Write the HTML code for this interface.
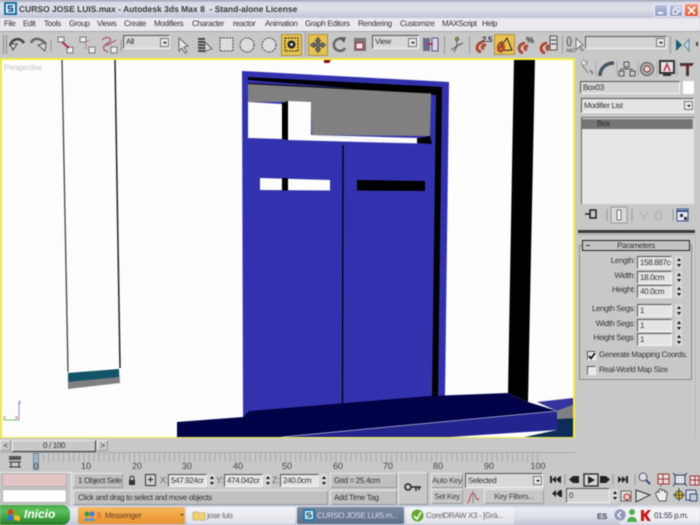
<!DOCTYPE html>
<html><head><meta charset="utf-8">
<style>
html,body{margin:0;padding:0;width:700px;height:525px;overflow:hidden;background:#c8c8c8}
body{font-family:"Liberation Sans",sans-serif;font-size:8px;letter-spacing:-.35px;color:#333;text-rendering:geometricPrecision}
#r{position:absolute;left:0;top:0;width:700px;height:525px;overflow:hidden;filter:blur(.5px)}
.a{position:absolute;white-space:nowrap}
.f{position:absolute;background:#e4e4e4;border-top:1px solid #555;border-left:1px solid #555;border-right:1px solid #f5f5f5;border-bottom:1px solid #f5f5f5;box-sizing:border-box;white-space:nowrap;overflow:hidden;line-height:12px;padding-left:2px}
.b{position:absolute;background:#c8c8c8;border-top:1px solid #e8e8e8;border-left:1px solid #e8e8e8;border-right:1px solid #999;border-bottom:1px solid #999;box-sizing:border-box;text-align:center;white-space:nowrap;overflow:hidden}
.s{position:absolute;width:7px;height:13px;background:#d8d8d8}
.s:before{content:"";position:absolute;left:1.5px;top:2px;border-left:2px solid transparent;border-right:2px solid transparent;border-bottom:3px solid #111}
.s:after{content:"";position:absolute;left:1.5px;top:8px;border-left:2px solid transparent;border-right:2px solid transparent;border-top:3px solid #111}
.l{position:absolute;text-align:right;width:60px;left:575px;white-space:nowrap}
.dd{position:absolute;width:9px;height:9px;background:#e8e8e8;border:1px solid #777;box-sizing:border-box}
.dd:after{content:"";position:absolute;left:1.5px;top:2.5px;border-left:2px solid transparent;border-right:2px solid transparent;border-top:2.5px solid #000}
.tb{position:absolute;top:507px;height:17px;box-sizing:border-box;border-radius:2px;line-height:17px;white-space:nowrap;overflow:hidden}
.n{position:absolute;top:461px;font-size:9px;letter-spacing:0;color:#444;transform:translateX(-50%)}
.m{position:absolute;top:19px;white-space:nowrap;color:#333}
svg{position:absolute;overflow:visible}
</style></head><body><div id="r">

<!-- title bar -->
<div class="a" style="left:0;top:0;width:700px;height:18px;background:linear-gradient(#8b90ac 0,#d6d8e4 12%,#dfe1ea 50%,#bfc3d6 100%)"></div>
<svg style="left:4px;top:2px" width="13" height="13"><rect width="13" height="13" fill="#1f6f9e"/><rect x="2" y="2" width="9" height="9" fill="#dff"/><path d="M9 4H4.500V6.500H8.500V9H4" fill="none" stroke="#1a4f8a" stroke-width="1.600"/></svg>
<div class="a" style="left:19px;top:3px;font-size:8.500px;font-weight:bold;color:#3a3a3a;line-height:13px;letter-spacing:0">CURSO JOSE LUIS.max  -  Autodesk 3ds Max 8  &nbsp;- Stand-alone License</div>
<div class="a" style="left:654px;top:4px;width:14px;height:13px;background:linear-gradient(#b8c0dc,#8e98c0);border:1px solid #eef;box-sizing:border-box;border-radius:2px"></div>
<div class="a" style="left:658px;top:12px;width:5px;height:2px;background:#fff"></div>
<div class="a" style="left:669px;top:4px;width:14px;height:13px;background:linear-gradient(#b8c0dc,#8e98c0);border:1px solid #eef;box-sizing:border-box;border-radius:2px"></div>
<svg style="left:672px;top:6px" width="9" height="9"><path d="M1 3.500H5.500V8H1ZM3 3V1H8V5.500H6" fill="none" stroke="#fff"/></svg>
<div class="a" style="left:684px;top:3px;width:15px;height:14px;background:linear-gradient(#ee9a80,#d85030);border:1px solid #fdd;box-sizing:border-box;border-radius:2px"></div>
<svg style="left:687px;top:6px" width="9" height="9"><path d="M1 1L8 8M8 1L1 8" stroke="#fff" stroke-width="1.600"/></svg>

<!-- menu -->
<div class="a" style="left:0;top:18px;width:700px;height:14px;background:#e9e9ee"></div>
<div class="a" style="left:0;top:31px;width:700px;height:1px;background:#aaa"></div>
<div class="m" style="left:4px">File</div>
<div class="m" style="left:23px">Edit</div>
<div class="m" style="left:44px">Tools</div>
<div class="m" style="left:69px">Group</div>
<div class="m" style="left:97px">Views</div>
<div class="m" style="left:124px">Create</div>
<div class="m" style="left:154px">Modifiers</div>
<div class="m" style="left:192px">Character</div>
<div class="m" style="left:233px">reactor</div>
<div class="m" style="left:265px">Animation</div>
<div class="m" style="left:305px">Graph Editors</div>
<div class="m" style="left:358px">Rendering</div>
<div class="m" style="left:400px">Customize</div>
<div class="m" style="left:442px">MAXScript</div>
<div class="m" style="left:482px">Help</div>

<!-- toolbar -->
<div class="a" style="left:0;top:32px;width:700px;height:26px;background:#c8c8c8"></div>
<div class="a" style="left:3px;top:35px;width:1px;height:19px;background:#888"></div>
<div class="a" style="left:6px;top:35px;width:1px;height:19px;background:#888"></div>
<svg style="left:0;top:32px" width="700" height="26" fill="none">
<path d="M10 14C12 6 20 5 24 11" stroke="#444" stroke-width="2.500"/><path d="M10 12L17 12L13 18Z" fill="#ddd" stroke="#444"/>
<path d="M45 11C39 5 33 6 31 11" stroke="#666" stroke-width="2.500"/><path d="M38 13L46 11L45 19Z" fill="#ddd" stroke="#555"/>
<line x1="51" y1="8" x2="51" y2="20" stroke="#999"/>
<rect x="58" y="5" width="6" height="5" fill="#eee" stroke="#777"/><rect x="67" y="15" width="6" height="6" fill="#eee" stroke="#777"/><path d="M62 10L69 16" stroke="#b03040" stroke-width="2"/>
<rect x="80" y="5" width="6" height="5" fill="#eee" stroke="#777"/><rect x="89" y="15" width="6" height="6" fill="#eee" stroke="#777"/><path d="M84 11L90 8M86 12L86 18" stroke="#c06070" stroke-dasharray="2 1"/>
<rect x="111" y="15" width="6" height="6" fill="#eee" stroke="#777"/><path d="M102 8C108 2 114 8 108 11C102 14 102 18 108 20M106 14L116 8" stroke="#a04050"/>
<line x1="121" y1="8" x2="121" y2="20" stroke="#999"/>
<path d="M179 6V19L182 16L185 21L187 20L184 15L188 14Z" fill="#e8e8e8" stroke="#666"/>
<path d="M198 7H205M198 10H205M198 13H205M198 16H205M198 19H205" stroke="#444" stroke-width="2"/><path d="M205 10V20L208 18L212 17Z" fill="#ddd" stroke="#666"/>
<rect x="220" y="6" width="13" height="13" fill="#ddd" stroke="#444" stroke-dasharray="2 1"/>
<circle cx="247" cy="13" r="7" fill="#ddd" stroke="#444" stroke-dasharray="2 1"/>
<circle cx="269" cy="13" r="7" fill="#ddd" stroke="#444" stroke-dasharray="2 1"/>
</svg>
<div class="f" style="left:123px;top:35px;width:47px;height:14px;background:#d8d8d8">All</div>
<div class="dd" style="left:160px;top:38px"></div>
<div class="a" style="left:281px;top:34px;width:21px;height:22px;background:#e8c250;border:1px solid #a89040;box-sizing:border-box"></div>
<svg style="left:281px;top:34px" width="21" height="22" fill="none"><rect x="4" y="4" width="13" height="13" stroke="#222" stroke-dasharray="2 1"/><circle cx="10.500" cy="10.500" r="4" fill="#222"/><circle cx="10.500" cy="10.500" r="1.500" fill="#ddd"/></svg>
<div class="a" style="left:305px;top:32px;width:1px;height:24px;background:#999"></div>
<div class="a" style="left:308px;top:34px;width:20px;height:22px;background:#e8c250;border:1px solid #a89040;box-sizing:border-box"></div>
<svg style="left:308px;top:34px" width="20" height="22"><path d="M10 3L13 7H11.500V9.500H14V8L18 11L14 14V12.500H11.500V15H13L10 19L7 15H8.500V12.500H6V14L2 11L6 8V9.500H8.500V7H7Z" fill="#666" stroke="#333" stroke-width=".5"/></svg>
<svg style="left:330px;top:35px" width="20" height="20" fill="none"><path d="M14 4C8 2 3 6 4 11C5 16 12 18 15 13" stroke="#666" stroke-width="2.500"/><path d="M10 3L16 2L14 8Z" fill="#555"/></svg>
<svg style="left:354px;top:38px" width="14" height="14"><rect width="12" height="13" fill="#777"/><rect x="2" y="5" width="7" height="6" fill="#f2e4e4" stroke="#b03040"/></svg>
<div class="f" style="left:372px;top:35px;width:47px;height:14px;background:#d8d8d8">View</div>
<div class="dd" style="left:408px;top:38px"></div>
<svg style="left:422px;top:36px" width="18" height="16"><rect x="1" y="2" width="7" height="13" fill="#6a6a8a"/><rect x="10" y="2" width="6" height="13" fill="#d8d8e8" stroke="#557"/><path d="M6 8H11" stroke="#c03040" stroke-width="2"/></svg>
<div class="a" style="left:444px;top:36px;width:1px;height:18px;background:#999"></div>
<svg style="left:449px;top:36px" width="16" height="18" fill="none" stroke="#555"><path d="M8 3V10M8 10L2 14M8 10L14 7M5 16L8 10"/><circle cx="8" cy="3" r="1.500" fill="#c8b040"/></svg>
<div class="a" style="left:469px;top:36px;width:1px;height:18px;background:#999"></div>
<svg style="left:473px;top:33px" width="22" height="22" fill="none"><path d="M10 9C3 10 2 18 8 19" stroke="#b04830" stroke-width="3"/><path d="M13 12C9 12 8 15 11 16" stroke="#b04830" stroke-width="3"/><text x="9" y="9" font-family="Liberation Sans" font-size="8" font-weight="bold" fill="#333" stroke="none">2.5</text></svg>
<div class="a" style="left:494px;top:34px;width:21px;height:21px;background:#e8c250;border:1px solid #a89040;box-sizing:border-box"></div>
<svg style="left:494px;top:34px" width="21" height="21" fill="none"><path d="M4 17L13 4L18 16Z" stroke="#222"/><path d="M9 8C3 10 3 16 8 18" stroke="#b04830" stroke-width="3"/><path d="M11 12C8 12 8 15 11 16" stroke="#b04830" stroke-width="3"/></svg>
<svg style="left:517px;top:33px" width="20" height="22" fill="none"><path d="M8 10C1 11 0 18 6 20" stroke="#b04830" stroke-width="3"/><path d="M11 13C7 13 7 16 10 17" stroke="#b04830" stroke-width="3"/><text x="9" y="10" font-family="Liberation Sans" font-size="9" font-weight="bold" fill="#333" stroke="none">%</text></svg>
<svg style="left:539px;top:33px" width="20" height="22" fill="none"><path d="M8 10C1 11 0 18 6 20" stroke="#b04830" stroke-width="3"/><path d="M11 13C7 13 7 16 10 17" stroke="#b04830" stroke-width="3"/><rect x="11" y="3" width="7" height="14" fill="#ddd" stroke="#555"/><path d="M12 7H17M12 11H17" stroke="#333"/></svg>
<div class="a" style="left:562px;top:36px;width:1px;height:18px;background:#999"></div>
<div class="a" style="left:566px;top:36px;font-size:10px;color:#444">{}</div>
<div class="a" style="left:566px;top:48px;font-size:5px;color:#444">ABC</div>
<svg style="left:574px;top:37px" width="10" height="16"><path d="M2 1V13L5 10L8 14L9 13L6 9L9 8Z" fill="#e8e8e8" stroke="#777"/></svg>
<div class="f" style="left:585px;top:36px;width:82px;height:13px;background:#d4d4d4"></div>
<div class="dd" style="left:656px;top:38px"></div>
<div class="a" style="left:670px;top:36px;width:1px;height:18px;background:#999"></div>
<svg style="left:675px;top:38px" width="16" height="14"><path d="M1 1L7 7L1 13Z" fill="#1f6070"/><path d="M14 1L9 7L14 13Z" fill="#c8d4d8" stroke="#68a"/></svg>
<div class="a" style="left:696px;top:42px;width:2px;height:4px;background:#444"></div>

<!-- viewport -->
<svg style="left:0;top:58px" width="575" height="382" viewBox="0 58 575 382">
<rect x="0" y="58" width="575" height="382" fill="#fdfdfd"/>
<path d="M62 60L68 372" stroke="#444" stroke-width="1.300"/>
<path d="M115 60L120 368" stroke="#222" stroke-width="1.500"/>
<path d="M68 373L119 369L120 383L68 389Z" fill="#808080"/>
<path d="M68 373L119 369L119 377L68 382Z" fill="#135368"/>
<path d="M514 58H535L528 402L508 393Z" fill="#000"/>
<path d="M324 60H331L329 63H324Z" fill="#8a1010"/>
<path d="M242 71L449 82L445 397L243 417Z" fill="#3232ae"/>
<path d="M248 77L442 87L438 397L432 397L436 95L248 80Z" fill="#000"/>
<path d="M248 83L432 92.500V94L248 85Z" fill="#000"/>
<path d="M248 84L431 93.500L430 136L312 135L311 102L248 102Z" fill="#808080"/>
<path d="M248 102L282 104V139L248 138Z" fill="#fdfdfd"/>
<path d="M282 103L288 101V140L282 139Z" fill="#000"/>
<path d="M288 101L311 102V135L417 143.500L288 140Z" fill="#fdfdfd"/>
<path d="M311 135L417 138V143.500Z" fill="#fdfdfd"/>
<path d="M417 138.500L430 136L432 144L417 143Z" fill="#000"/>
<path d="M343 145L342.500 403" stroke="#000" stroke-width="1.300"/>
<path d="M260 178L330 180V190.500L260 190Z" fill="#fdfdfd"/>
<path d="M282 178H288V190.500H282Z" fill="#000"/>
<path d="M357 180L425 181V191L357 190.500Z" fill="#000"/>
<path d="M177 422L243 417L249 411L430 396L508 393L528 402L557 411L280 437L177 437Z" fill="#020248"/>
<path d="M557 411L280 437H450L557 430Z" fill="#24248f"/>
<path d="M557 411L282 437" stroke="#b8b8d8" stroke-width=".8"/>
<path d="M537 402L573 398V405L557 411Z" fill="#34349c"/>
<path d="M557 411L573 405V418L557 419Z" fill="#808080"/>
<path d="M557 419L573 418V438H520L557 430Z" fill="#0d2d58"/>
<rect x="1" y="59" width="573" height="379" fill="none" stroke="#f4ee40" stroke-width="2"/>
<path d="M19 420V402" stroke="#9a90cc" stroke-width="1"/>
<path d="M19 420H4" stroke="#80c070"/>
<text x="18" y="404" font-size="6" font-family="Liberation Sans" fill="#5050a0">z</text>
<text x="15" y="419" font-size="6" font-family="Liberation Sans" fill="#c04040">x</text>
<text x="3" y="419" font-size="6" font-family="Liberation Sans" fill="#50a050">y</text>
<text x="4" y="70" font-size="8" font-family="Liberation Sans" fill="#c4c4c4">Perspective</text>
</svg>

<!-- right panel -->
<div class="a" style="left:575px;top:58px;width:125px;height:380px;background:#c8c8c8"></div>
<svg style="left:576px;top:59px" width="124" height="20" fill="none">
<path d="M6 6L12 14" stroke="#777"/><path d="M5 3L8 1L10 4L12 2L10 6L7 6Z" fill="#eee" stroke="#999"/><path d="M14 11L17 15" stroke="#888" stroke-width="2"/>
<line x1="20" y1="2" x2="20" y2="17" stroke="#aaa"/>
<path d="M24 17C24 9 30 4 38 4" stroke="#456" stroke-width="3.500"/>
<line x1="41" y1="2" x2="41" y2="17" stroke="#aaa"/>
<rect x="48" y="3" width="5" height="5" stroke="#555"/><rect x="43" y="12" width="5" height="5" stroke="#555"/><rect x="54" y="12" width="5" height="5" stroke="#555"/><path d="M50 8V10H45V12M50 10H56V12" stroke="#555"/>
<line x1="62" y1="2" x2="62" y2="17" stroke="#aaa"/>
<circle cx="71" cy="10" r="6.500" stroke="#555" fill="#aaa"/><circle cx="71" cy="10" r="3" stroke="#933" fill="#ddd"/>
<line x1="81" y1="2" x2="81" y2="17" stroke="#aaa"/>
<rect x="84" y="2" width="14" height="12" fill="#e8e0e8" stroke="#333" stroke-width="2"/><path d="M88 12L91 5L94 12" stroke="#c03040" stroke-width="1.500"/><path d="M87 16H95" stroke="#333" stroke-width="2"/>
<line x1="101" y1="2" x2="101" y2="17" stroke="#aaa"/>
<path d="M104 4H118L116 7H113V17H110V7H104Z" fill="#5a3030"/>
</svg>
<div class="f" style="left:580px;top:81px;width:100px;height:13px;background:#d4d4d4">Box03</div>
<div class="a" style="left:683px;top:81px;width:11px;height:13px;background:#fdfdfd"></div>
<div class="f" style="left:581px;top:98px;width:113px;height:15px;line-height:13px">Modifier List</div>
<div class="dd" style="left:684px;top:101px"></div>
<div class="a" style="left:581px;top:117px;width:113px;height:87px;background:#e6e6e6;border-left:1px solid #666;border-top:1px solid #666;box-sizing:border-box"></div>
<div class="a" style="left:582px;top:119px;width:111px;height:10px;background:#757575;color:#222;line-height:10px;padding-left:15px;box-sizing:border-box">Box</div>
<svg style="left:580px;top:206px" width="115" height="18" fill="none">
<path d="M5 8H10M10 4V12H16V4Z" stroke="#222" stroke-width="1.500"/>
<line x1="27" y1="3" x2="27" y2="15" stroke="#999"/>
<rect x="31" y="1" width="16" height="16" fill="#d8d8d8" stroke="#999"/><path d="M37 4H41V14H37Z" fill="#f4f4f4" stroke="#777"/>
<line x1="52" y1="3" x2="52" y2="15" stroke="#999"/>
<path d="M60 6L64 12L68 6M64 12V14" stroke="#aaa"/>
<rect x="76" y="5" width="5" height="9" rx="2.500" stroke="#aaa"/>
<line x1="93" y1="3" x2="93" y2="15" stroke="#999"/>
<rect x="97" y="3" width="11" height="12" fill="#e8e8f4" stroke="#34508a"/><path d="M97 5H108" stroke="#34508a" stroke-width="2"/><rect x="100" y="8" width="3" height="3" fill="#333"/><rect x="104" y="11" width="3" height="3" fill="#333"/>
</svg>
<div class="a" style="left:578px;top:230px;width:117px;height:3px;background:#3a3a3a"></div>
<div class="a" style="left:577px;top:234px;width:118px;height:1px;background:#aaa"></div>
<div class="a" style="left:579px;top:245px;width:113px;height:135px;border:1px solid #888;box-sizing:border-box"></div>
<div class="b" style="left:582px;top:240px;width:108px;height:11px;background:#c4c4c4;border:1px solid #222;line-height:9px;color:#333">Parameters</div>
<div class="a" style="left:586px;top:245px;width:4px;height:1px;background:#333"></div>

<div class="l" style="top:256px">Length:</div>
<div class="f" style="left:637px;top:256px;width:35px;height:13px">158.887cr</div><div class="s" style="left:675px;top:256px"></div>
<div class="l" style="top:271px">Width:</div>
<div class="f" style="left:637px;top:271px;width:35px;height:13px">18.0cm</div><div class="s" style="left:675px;top:271px"></div>
<div class="l" style="top:285px">Height:</div>
<div class="f" style="left:637px;top:285px;width:35px;height:13px">40.0cm</div><div class="s" style="left:675px;top:285px"></div>
<div class="l" style="top:304px">Length Segs:</div>
<div class="f" style="left:637px;top:304px;width:35px;height:13px">1</div><div class="s" style="left:675px;top:304px"></div>
<div class="l" style="top:319px">Width Segs:</div>
<div class="f" style="left:637px;top:319px;width:35px;height:13px">1</div><div class="s" style="left:675px;top:319px"></div>
<div class="l" style="top:333px">Height Segs:</div>
<div class="f" style="left:637px;top:333px;width:35px;height:13px">1</div><div class="s" style="left:675px;top:333px"></div>

<div class="f" style="left:587px;top:351px;width:9px;height:9px;background:#e8e8e8"></div>
<svg style="left:588px;top:352px" width="8" height="8"><path d="M1 4L3 6.500L7 1" fill="none" stroke="#000" stroke-width="1.500"/></svg>
<div class="a" style="left:599px;top:350px">Generate Mapping Coords.</div>
<div class="f" style="left:587px;top:366px;width:9px;height:9px;background:#e8e8e8"></div>
<div class="a" style="left:599px;top:365px">Real-World Map Size</div>
<div class="a" style="left:695px;top:232px;width:1px;height:206px;background:#bbb"></div>

<!-- time slider -->
<div class="a" style="left:0;top:438px;width:700px;height:67px;background:#c8c8c8"></div>
<div class="b" style="left:0;top:440px;width:11px;height:11px;line-height:9px">&lt;</div>
<div class="b" style="left:12px;top:440px;width:84px;height:12px;line-height:10px;border-bottom:1px solid #333;border-right:1px solid #333">0 / 100</div>
<div class="b" style="left:97px;top:440px;width:11px;height:11px;line-height:9px">&gt;</div>
<div class="a" style="left:0;top:452px;width:575px;height:1px;background:#aaa"></div>
<svg style="left:9px;top:456px" width="13" height="13" fill="none"><rect x="0" y="0" width="12" height="4" fill="#555"/><path d="M0 6H12M2 6V11M10 6V11M0 11H12" stroke="#333"/></svg>
<div class="a" style="left:33px;top:453px;width:507px;height:9px;background:repeating-linear-gradient(90deg,#aaa 0 1px,transparent 1px 5.040px)"></div>
<div class="a" style="left:33px;top:453px;width:6px;height:17px;background:#9fb8c8;border:1px solid #789;box-sizing:border-box"></div>
<div class="n" style="left:36px">0</div>
<div class="n" style="left:86px">10</div>
<div class="n" style="left:137px">20</div>
<div class="n" style="left:187px">30</div>
<div class="n" style="left:238px">40</div>
<div class="n" style="left:287px">50</div>
<div class="n" style="left:338px">60</div>
<div class="n" style="left:388px">70</div>
<div class="n" style="left:438px">80</div>
<div class="n" style="left:489px">90</div>
<div class="n" style="left:538px">100</div>
<div class="a" style="left:0;top:472px;width:71px;height:1px;background:#eee"></div>
<div class="a" style="left:2px;top:473px;width:65px;height:14px;background:#e2c6c6;border:1px solid #aaa;box-sizing:border-box"></div>
<div class="a" style="left:2px;top:489px;width:65px;height:14px;background:#fdfdfd;border:1px solid #aaa;box-sizing:border-box"></div>
<div class="a" style="left:71px;top:472px;width:1px;height:33px;background:#eee"></div>

<div class="b" style="left:73px;top:473px;width:50px;height:15px;line-height:13px;text-align:left;padding-left:4px;background:#c0c0c0">1 Object Sele</div>
<svg style="left:127px;top:475px" width="10" height="11"><path d="M3 5V3C3 0.500 7 0.500 7 3V5" fill="none" stroke="#333"/><rect x="2" y="5" width="6" height="5" fill="#333"/></svg>
<div class="b" style="left:145px;top:474px;width:11px;height:12px;border:1px solid #333;background:#d0d0d0"></div>
<div class="a" style="left:148px;top:479px;width:5px;height:1px;background:#222"></div>
<div class="a" style="left:150px;top:477px;width:1px;height:5px;background:#222"></div>
<div class="a" style="left:160px;top:475px;font-size:9px;color:#666">X:</div>
<div class="f" style="left:168px;top:474px;width:39px;height:13px">547.924cr</div><div class="s" style="left:208px;top:474px"></div>
<div class="a" style="left:216px;top:475px;font-size:9px;color:#666">Y:</div>
<div class="f" style="left:224px;top:474px;width:39px;height:13px">474.042cr</div><div class="s" style="left:264px;top:474px"></div>
<div class="a" style="left:272px;top:475px;font-size:9px;color:#666">Z:</div>
<div class="f" style="left:280px;top:474px;width:39px;height:13px">240.0cm</div><div class="s" style="left:320px;top:474px"></div>
<div class="b" style="left:330px;top:473px;width:67px;height:15px;line-height:13px;text-align:left;padding-left:3px;background:#c0c0c0">Grid = 25.4cm</div>
<div class="b" style="left:73px;top:490px;width:255px;height:15px;line-height:13px;text-align:left;padding-left:4px;background:#c0c0c0">Click and drag to select and move objects</div>
<div class="b" style="left:330px;top:490px;width:67px;height:15px;line-height:13px;text-align:left;padding-left:3px;background:#c0c0c0">Add Time Tag</div>
<div class="b" style="left:398px;top:472px;width:30px;height:33px"></div>
<svg style="left:404px;top:483px" width="18" height="10" fill="none"><circle cx="4" cy="4" r="3" stroke="#222" stroke-width="1.500"/><path d="M7 4H17M12 4V8M15 4V7" stroke="#222" stroke-width="1.500"/></svg>
<div class="b" style="left:431px;top:473px;width:32px;height:15px;line-height:13px;color:#444">Auto Key</div>
<div class="b" style="left:431px;top:489px;width:32px;height:15px;line-height:13px;color:#444">Set Key</div>
<div class="f" style="left:465px;top:473px;width:78px;height:15px;line-height:13px;background:#d8d8d8">Selected</div>
<div class="dd" style="left:533px;top:476px"></div>
<svg style="left:466px;top:490px" width="16" height="14" fill="none"><path d="M1 13C4 13 4 3 7 3C10 3 9 11 13 9" stroke="#c04050"/><path d="M7 0V13" stroke="#888"/></svg>
<div class="b" style="left:484px;top:489px;width:60px;height:15px;line-height:13px;color:#444">Key Filters...</div>

<!-- transport -->
<svg style="left:540px;top:470px" width="160" height="36">
<g fill="#222">
<path d="M10 6H12V13H10ZM12 9.500L16 6V13ZM16 9.500L20 6V13ZM20 6H21V13H20Z"/>
<line x1="25" y1="4" x2="25" y2="15" stroke="#999"/>
<path d="M29 9.500L33 6V13ZM33 6H39V13H33Z"/>
<rect x="44" y="4" width="14" height="12" fill="#d8d8d8" stroke="#222" stroke-width="1.300"/><path d="M48 6L55 10L48 14Z"/>
<path d="M60 6H66V13H60ZM66 6L70 9.500L66 13Z"/>
<line x1="73" y1="4" x2="73" y2="15" stroke="#999"/>
<path d="M78 6L82 9.500L78 13ZM82 6L86 9.500L82 13ZM86 6H88V13H86Z"/>
<line x1="95" y1="4" x2="95" y2="15" stroke="#999"/>
<path d="M15 20L11 23.500L15 27ZM19 20L15 23.500L19 27ZM19 20H21V27H19Z" transform="translate(1,0)"/>
</g>
<g fill="none">
<circle cx="103" cy="7" r="4" stroke="#555" fill="#dde"/><path d="M106 10L110 14" stroke="#447" stroke-width="2"/>
<rect x="118" y="4" width="11" height="10" fill="#e8dcdc" stroke="#a03030"/><path d="M123 4V14M118 9H129" stroke="#a03030"/><path d="M121 14V17" stroke="#777"/>
<rect x="135" y="5" width="10" height="9" fill="#dde" stroke="#345"/><path d="M133 3L136 6M147 3L144 6M133 16L136 13M147 16L144 13" stroke="#345"/>
<rect x="150" y="6" width="9" height="9" fill="#e8dcdc" stroke="#a03030"/><path d="M155 6V15M150 10H159" stroke="#a03030"/>
<path d="M96 24L110 29L96 36Z" transform="translate(0,-4)" stroke="#333" fill="#ddd"/>
<path d="M116 25C115 21 119 21 119 23V20C120 18 122 19 122 21C123 19 125 20 125 22C126 21 128 22 127 24L126 31H119Z" stroke="#555" fill="#eee"/>
<circle cx="139" cy="25" r="4" stroke="#444" fill="#d8b830"/><path d="M139 18V31M133 25H145" stroke="#444"/>
<rect x="146" y="20" width="10" height="10" stroke="#344a80" fill="#ddd"/><rect x="150" y="24" width="7" height="7" stroke="#344a80" fill="#bcc"/>
</g>
</svg>
<div class="f" style="left:566px;top:488px;width:44px;height:15px;line-height:13px;background:#d4d4d4">0</div>
<div class="s" style="left:611px;top:489px"></div>
<svg style="left:620px;top:490px" width="12" height="12"><rect x="1" y="1" width="10" height="10" fill="#ddd" stroke="#666"/><circle cx="7" cy="7" r="3" fill="#e8c8c0" stroke="#a03030"/></svg>

<!-- taskbar -->
<div class="a" style="left:0;top:505px;width:700px;height:20px;background:linear-gradient(#b8c0d8 0,#e8ebf2 15%,#dcdfe8 60%,#c0c4d4 100%)"></div>
<div class="a" style="left:0;top:505px;width:70px;height:20px;background:linear-gradient(#4aa84a,#5cc25c 30%,#3a9a3a 70%,#2a7a2a);border-radius:0 8px 8px 0"></div>
<svg style="left:7px;top:508px" width="15" height="14"><path d="M1 2L6 1V6L1 7Z" fill="#d84020"/><path d="M7 1L13 2V7L7 6Z" fill="#68b030"/><path d="M1 8L6 7V12L1 13Z" fill="#3870d8"/><path d="M7 7L13 8V13L7 12Z" fill="#f0c020"/></svg>
<div class="a" style="left:24px;top:507px;color:#fff;font-size:12px;letter-spacing:0;font-style:italic;font-weight:bold;line-height:15px">Inicio</div>
<div class="tb" style="left:78px;width:107px;background:linear-gradient(#f4b860,#f0a040 60%,#e89430);padding-left:19px;color:#664020"><span style="color:#d05020">5</span> &nbsp;Messenger</div>
<svg style="left:83px;top:510px" width="14" height="12"><circle cx="4" cy="4" r="2.500" fill="#3a9a3a"/><circle cx="9" cy="4" r="2.500" fill="#4080d0"/><path d="M1 11C1 7 7 7 7 11ZM6 11C6 7 12 7 12 11Z" fill="#5a9ad0"/></svg>
<div class="a" style="left:180px;top:514px;border-left:2px solid transparent;border-right:2px solid transparent;border-top:2px solid #444"></div>
<div class="tb" style="left:187px;width:108px;background:linear-gradient(#f4f4f8,#e0e2ea);padding-left:20px;color:#666">jose luis</div>
<svg style="left:193px;top:510px" width="13" height="11"><path d="M0 2H5L6 3H12V10H0Z" fill="#f0d070" stroke="#a89040" stroke-width=".5"/></svg>
<div class="tb" style="left:297px;width:107px;background:linear-gradient(#7c8aa0,#5e6e88);padding-left:20px;color:#dde">CURSO JOSE LUIS.m...</div>
<svg style="left:303px;top:509px" width="12" height="12"><rect width="12" height="12" fill="#2878a8"/><rect x="2" y="2" width="8" height="8" fill="#cee"/><path d="M8 4H4V6H8V8H4" stroke="#146" fill="none"/></svg>
<div class="tb" style="left:406px;width:108px;background:linear-gradient(#f4f4f8,#e0e2ea);padding-left:20px;color:#666">CorelDRAW X3 - [Grá...</div>
<svg style="left:411px;top:509px" width="13" height="13"><circle cx="6.500" cy="6.500" r="6" fill="#60a830"/><path d="M3 7L6 10L10 3" stroke="#fff" fill="none" stroke-width="1.500"/></svg>
<div class="a" style="left:597px;top:512px;color:#445;font-weight:bold">ES</div>
<div class="a" style="left:620px;top:505px;width:80px;height:20px;background:linear-gradient(#cfd3e0,#f4f5f8 20%,#eef0f4 70%,#d8dbe4)"></div>
<svg style="left:612px;top:508px" width="55" height="15">
<circle cx="8" cy="7" r="6" fill="#9098b8" stroke="#dde"/><path d="M9 4L6 7L9 10" stroke="#fff" fill="none" stroke-width="1.500"/>
<circle cx="20" cy="4" r="3" fill="#50b050"/><path d="M15 14C15 7 25 7 25 14Z" fill="#50b050"/>
<path d="M29 2H32V6L36 2H39L35 7L39 13H35.500L32 8V13H29Z" fill="#c81818"/>
</svg>
<div class="a" style="left:654px;top:511px;color:#334">01:55 p.m.</div>

</div></body></html>
